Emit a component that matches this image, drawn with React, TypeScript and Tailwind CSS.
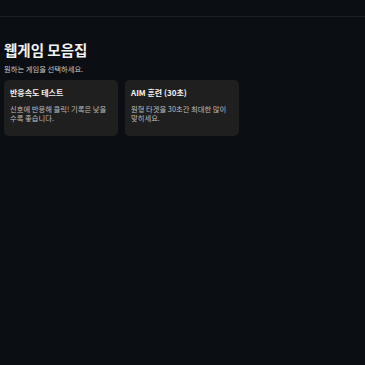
const games = [
  {
    title: "반응속도 테스트",
    desc: "신호에 반응해 클릭! 기록은 낮을 수록 좋습니다.",
  },
  {
    title: "AIM 훈련 (30초)",
    desc: "원형 타겟을 30초간 최대한 많이 맞히세요.",
  },
];

const App = () => {
  return (
    <div
      className="min-h-screen w-full bg-[#0b0f14] text-[#e6e6e6]"
      style={{ fontFamily: '"Noto Sans CJK KR", "Noto Sans", sans-serif' }}
    >
      {/* Top bar */}
      <header className="h-[17px] border-b border-[#1c2026]" />

      <main className="px-[4px] pt-[23px]">
        <h1 className="text-[14.5px] font-bold leading-[20px] text-[#f2f2f2]">웹게임 모음집</h1>
        <p className="mt-[4px] text-[7.3px] leading-[10px] text-[#c8c8c8]">원하는 게임을 선택하세요.</p>

        <div className="mt-[6px] flex gap-[7px]">
          {games.map((g) => (
            <div key={g.title} className="h-[56px] w-[114px] rounded-[5px] bg-[#1f1f20] px-[6px] pt-[7px]">
              <div className="text-[8px] font-bold leading-[12px] text-[#f5f5f5]">{g.title}</div>
              <div className="mt-[6px] text-[7.3px] leading-[9px] text-[#bdbdbd]">{g.desc}</div>
            </div>
          ))}
        </div>
      </main>
    </div>
  );
};

export default App;
